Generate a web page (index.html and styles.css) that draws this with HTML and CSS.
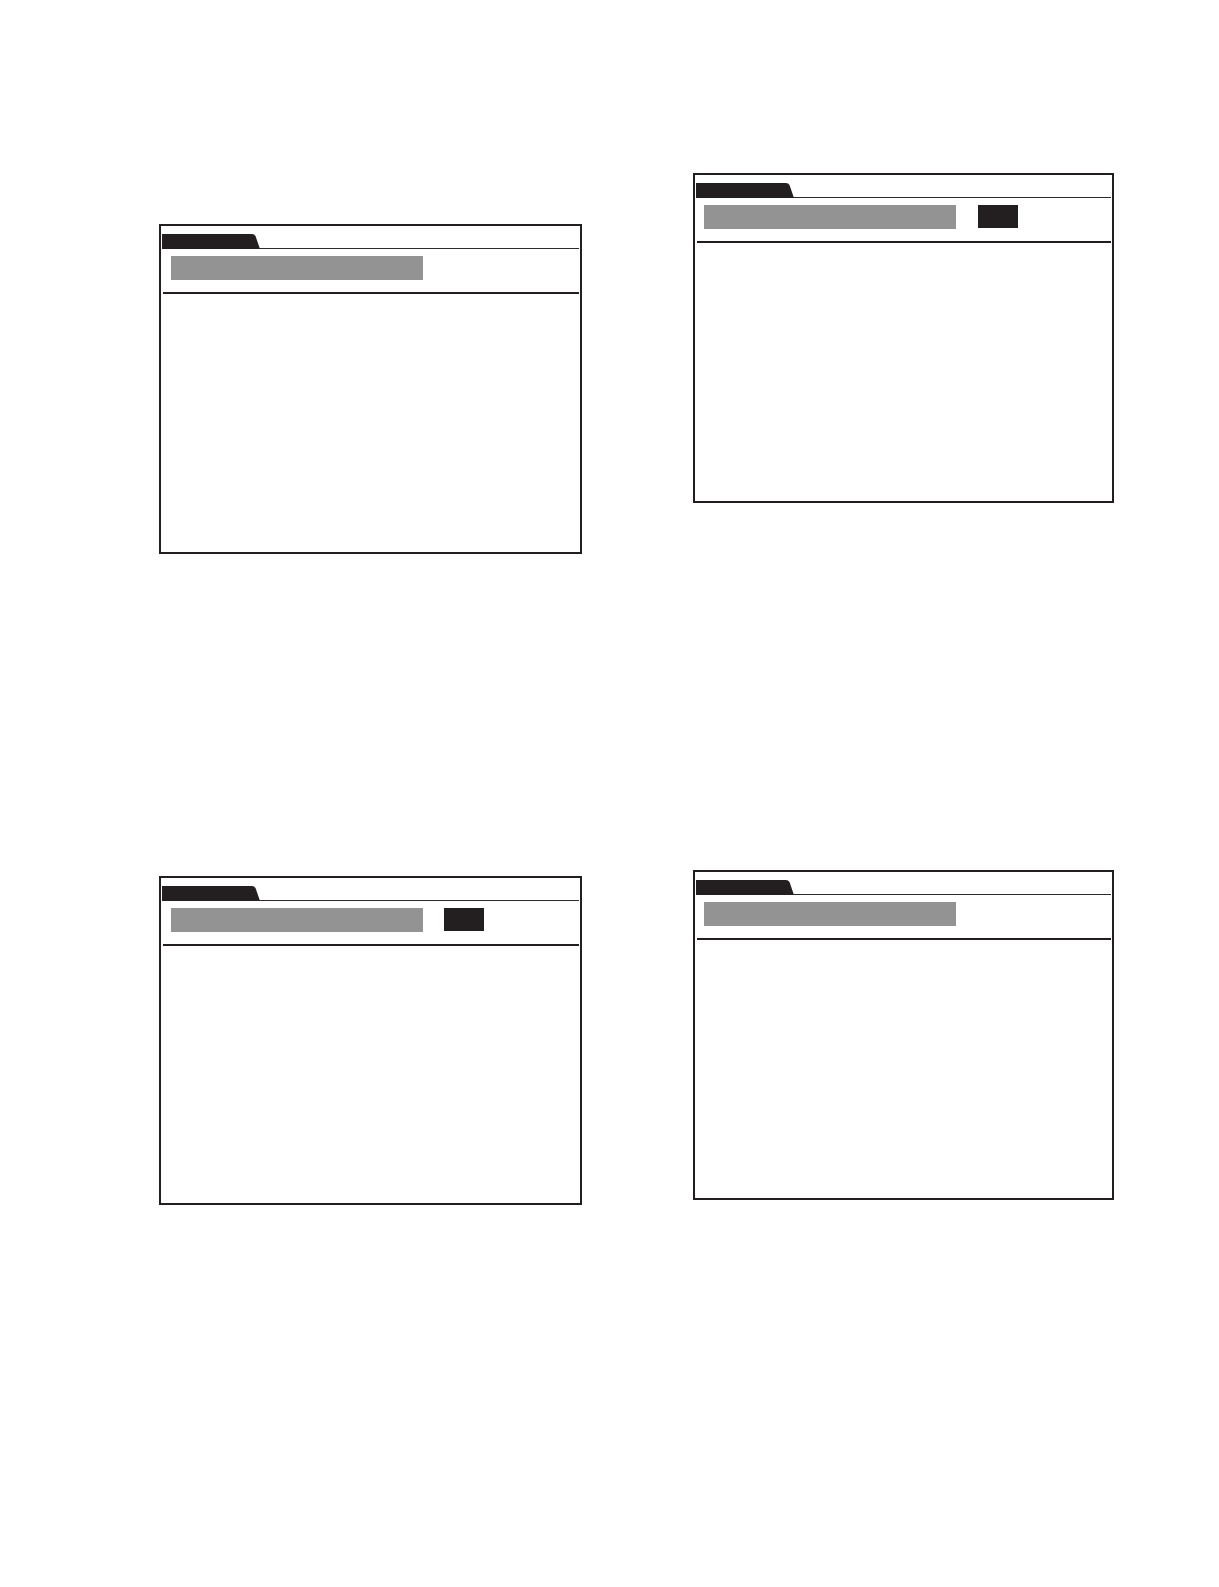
FILE: index.html
```html
<!DOCTYPE html>
<html lang="en">
<head>
<meta charset="utf-8">
<title>Panels</title>
<link rel="stylesheet" href="styles.css">
</head>
<body>
<main class="page">
  <section class="panel panel-a">
    <div class="panel-head"><span class="tab"></span></div>
    <div class="panel-row"><span class="field"></span></div>
    <div class="panel-rule"></div>
  </section>
  <section class="panel panel-b">
    <div class="panel-head"><span class="tab"></span></div>
    <div class="panel-row"><span class="field"></span><span class="btn"></span></div>
    <div class="panel-rule"></div>
  </section>
  <section class="panel panel-c">
    <div class="panel-head"><span class="tab"></span></div>
    <div class="panel-row"><span class="field"></span><span class="btn"></span></div>
    <div class="panel-rule"></div>
  </section>
  <section class="panel panel-d">
    <div class="panel-head"><span class="tab"></span></div>
    <div class="panel-row"><span class="field"></span></div>
    <div class="panel-rule"></div>
  </section>
</main>
</body>
</html>
```
FILE: styles.css
```css
html, body {
  margin: 0;
  padding: 0;
  background: #ffffff;
  font-family: "Liberation Sans", Arial, sans-serif;
}

.page {
  display: grid;
  grid-template-columns: 423px 423px;
  column-gap: 111px;
  align-items: start;
  padding-left: 159px;
  width: 1219px;
  box-sizing: border-box;
}

.panel {
  box-sizing: border-box;
  width: 423px;
  height: 330px;
  border: 2px solid #231f20;
  background: #ffffff;
}

.panel-a { margin-top: 224px; }
.panel-b { margin-top: 173px; width: 421px; }
.panel-c { margin-top: 322px; height: 329px; }
.panel-d { margin-top: 316px; width: 421px; }

.panel-head {
  margin: 8px 1px 0 1px;
  height: 14px;
  border-bottom: 1.5px solid #2f2b2c;
}

.tab {
  display: block;
  width: 98px;
  height: 15px;
  background: #231f20;
  clip-path: polygon(0 0, 90px 0, 92px 0.5px, 93.5px 2px, 98px 15px, 0 15px);
}

.panel-row {
  display: flex;
  align-items: flex-start;
  gap: 21px;
  margin: 7px 0 0 10px;
  height: 24px;
}

.panel-b .panel-row,
.panel-d .panel-row {
  margin-left: 9px;
  gap: 22px;
}

.field {
  display: block;
  width: 252px;
  height: 24px;
  background: #939393;
}

.btn {
  display: block;
  width: 40px;
  height: 23px;
  background: #231f20;
}

.panel-rule {
  margin: 12px 1px 0 2px;
  height: 2px;
  background: #231f20;
}
```
